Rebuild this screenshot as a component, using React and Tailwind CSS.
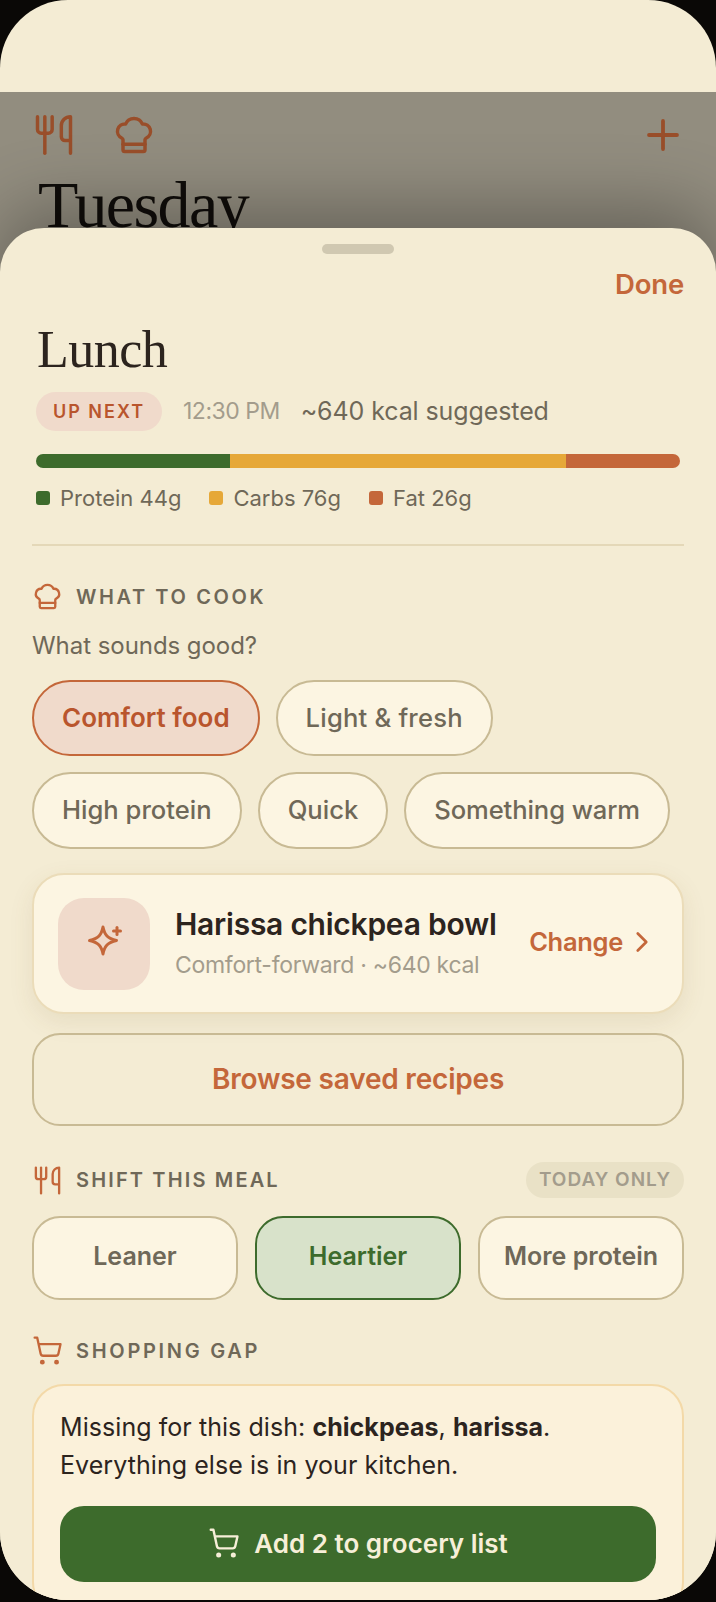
import React from "react";
import { ChefHat, Utensils, Plus, ShoppingCart, ChevronRight } from "lucide-react";

const Sparkle = () => (
  <svg width="36" height="36" viewBox="0 0 36 36" fill="none" stroke="#c4673a" strokeWidth="3" strokeLinecap="round" strokeLinejoin="round" className="overflow-visible">
    <path d="M17 1C18.6 9 21.5 12.4 30.5 14.5C21.5 16.6 18.6 20 17 28C15.4 20 12.5 16.6 3.5 14.5C12.5 12.4 15.4 9 17 1Z" />
    <path d="M31 1.5v7" />
    <path d="M27.5 5h7" />
  </svg>
);

const Chip = ({ children, active, tall, track = "" }) => (
  <div className={`${tall ? "h-[77px]" : "h-[76px]"} px-[28px] pb-[1px] flex items-center rounded-full border-2 leading-none ${track} ${active ? "text-[26px] bg-[#f0dacb] border-[#c4673a] text-[#b9552d] font-semibold" : "text-[25.6px] bg-[#fcf5e2] border-[#c8ba94] text-[#6f6858] font-medium"}`}>
    {children}
  </div>
);

const SectionLabel = ({ icon, children, track }) => (
  <div className="flex items-center gap-[13px]">
    <span className="w-[31px] flex justify-center">{icon}</span>
    <span className={`text-[20px] font-semibold text-[#6f6858] leading-none ${track}`}>{children}</span>
  </div>
);

const Shift = ({ children, active }) => (
  <div className={`flex-1 h-[84px] pb-[3px] rounded-[28px] border-2 flex items-center justify-center text-[25px] leading-none font-semibold ${active ? "bg-[#d8e2ca] border-[#3d6b2c] text-[#3d6b2c]" : "bg-[#fcf5e2] border-[#c8ba94] text-[#6f6858]"}`}>
    {children}
  </div>
);

export default function App() {
  return (
    <div className="w-[716px] h-[1602px] bg-[#0a0806] overflow-hidden font-['Inter',sans-serif]">
      <div className="relative w-[716px] h-[1600px] rounded-[68px] overflow-hidden bg-[#f4ecd4]">
        <div className="h-[92px]" />
        <div className="h-[240px] px-9 pt-[19px] overflow-hidden">
          <div className="flex items-center">
            <Utensils size={44} color="#ff8246" strokeWidth={1.9} className="-ml-[4px]" />
            <ChefHat size={44} color="#ff8246" strokeWidth={1.9} className="ml-[36px]" />
            <Plus size={48} color="#ff8246" strokeWidth={1.9} className="ml-auto -mr-[7px]" />
          </div>
          <div className="font-['Liberation_Serif',serif] text-[66px] leading-none tracking-[-1.6px] text-[#1c1712] mt-[13px] ml-[2px]">Tuesday</div>
        </div>
        <div className="absolute left-0 right-0 top-[92px] h-[200px] bg-black/40" />

        <div className="absolute left-0 right-0 top-[228px] bottom-0 rounded-t-[44px] bg-[#f4ecd4] px-8 overflow-hidden shadow-[0_-20px_70px_rgba(0,0,0,0.3)]">
          <div className="mt-4 mx-auto w-[72px] h-2.5 rounded-full bg-[#d0c8b1]" />
          <div className="mt-[14px] flex justify-end text-[27.5px] leading-[32px] font-semibold text-[#c4673a] tracking-[-0.2px]">Done</div>

          <div className="px-1">
            <div className="font-['Liberation_Serif',serif] text-[52px] leading-[60px] tracking-[-0.5px] text-[#2c241e] mt-[20px] pl-[1px]">Lunch</div>
            <div className="flex items-center mt-[12px] h-[39px]">
              <div className="h-[39px] w-[126px] rounded-full bg-[#f0dacb] text-[#b9552d] text-[18px] font-semibold tracking-[2px] flex items-center justify-center">UP NEXT</div>
              <span className="ml-[21px] text-[23px] text-[#a39c8c] tracking-[-0.5px]">12:30 PM</span>
              <span className="ml-[21px] text-[25px] text-[#6f6858] tracking-[-0.1px]">~640 kcal suggested</span>
            </div>
            <div className="flex mt-[23px] h-[14px] rounded-full overflow-hidden">
              <div className="w-[194px] bg-[#3d6b2c]" />
              <div className="w-[336px] bg-[#e6a838]" />
              <div className="flex-1 bg-[#c4673a]" />
            </div>
            <div className="flex items-center mt-[16px] h-[28px] text-[22px] text-[#6f6858]">
              <i className="w-[14px] h-[14px] rounded-[3px] bg-[#3d6b2c]" />
              <span className="ml-[10px]">Protein 44g</span>
              <i className="ml-[28px] w-[14px] h-[14px] rounded-[3px] bg-[#e6a838]" />
              <span className="ml-[10px]">Carbs 76g</span>
              <i className="ml-[28px] w-[14px] h-[14px] rounded-[3px] bg-[#c4673a]" />
              <span className="ml-[10px]">Fat 26g</span>
            </div>
          </div>

          <div className="mt-[32px] h-[2px] bg-[#e4d8b8]" />

          <div className="mt-[35px]">
            <SectionLabel track="tracking-[2.6px]" icon={<ChefHat size={31} color="#c4673a" strokeWidth={1.8} />}>WHAT TO COOK</SectionLabel>
          </div>
          <div className="mt-[18px] text-[24px] leading-[32px] text-[#6f6858] tracking-[-0.05px]">What sounds good?</div>

          <div className="mt-[18px] flex flex-wrap gap-x-[16px] gap-y-[16px]">
            <Chip active>Comfort food</Chip>
            <Chip track="tracking-[0.2px]">Light &amp; fresh</Chip>
            <Chip tall>High protein</Chip>
            <Chip tall>Quick</Chip>
            <Chip tall track="tracking-[-0.1px]">Something warm</Chip>
          </div>

          <div className="mt-[24px] h-[141px] rounded-[32px] border-2 border-[#ebdcb9] bg-[#fcf5e2] shadow-[0_8px_24px_rgba(120,90,40,0.1)] flex items-center pl-[24px] pr-[33px]">
            <div className="w-[92px] h-[92px] rounded-[26px] bg-[#f0dacb] flex items-center justify-center"><Sparkle /></div>
            <div className="ml-[25px] flex-1 pb-[2px]">
              <div className="text-[30px] leading-[36px] font-semibold text-[#2c241e] tracking-[-0.25px]">Harissa chickpea bowl</div>
              <div className="mt-[9px] text-[23px] leading-[28px] text-[#a39c8c] tracking-[-0.3px]">Comfort-forward · ~640 kcal</div>
            </div>
            <div className="flex items-center pb-[3px] text-[25.5px] font-semibold text-[#c4673a] tracking-[-0.3px]">
              Change<ChevronRight size={34} strokeWidth={1.9} className="ml-[2px] -mr-[10px]" />
            </div>
          </div>

          <div className="mt-[19px] h-[93px] pb-[2px] rounded-[28px] border-2 border-[#c8ba94] flex items-center justify-center text-[28px] font-semibold text-[#c4673a] tracking-[-0.2px]">Browse saved recipes</div>

          <div className="mt-[36px] flex items-center justify-between">
            <SectionLabel track="tracking-[2.15px]" icon={<Utensils size={31} color="#c4673a" strokeWidth={1.8} />}>SHIFT THIS MEAL</SectionLabel>
            <div className="h-[36px] w-[158px] rounded-full bg-[#e9e1c6] text-[#a39c8c] text-[19px] font-semibold tracking-[1px] flex items-center justify-center">TODAY ONLY</div>
          </div>

          <div className="mt-[18px] flex gap-[17px]">
            <Shift>Leaner</Shift>
            <Shift active>Heartier</Shift>
            <Shift>More protein</Shift>
          </div>

          <div className="mt-[35px]">
            <SectionLabel track="tracking-[2.7px]" icon={<ShoppingCart size={31} color="#c4673a" strokeWidth={1.8} />}>SHOPPING GAP</SectionLabel>
          </div>

          <div className="mt-[18px] rounded-[32px] border-2 border-[#f3d9a8] bg-[#fbf1da] px-[26px] pt-[22px] pb-[30px]">
            <div className="text-[25px] leading-[38px] text-[#2c241e] tracking-[0.06px]">
              Missing for this dish: <b className="font-bold">chickpeas</b>, <b className="font-bold">harissa</b>.<br />Everything else is in your kitchen.
            </div>
            <div className="mt-[22px] h-[76px] pb-[2px] rounded-[24px] bg-[#3d6b2c] flex items-center justify-center gap-[14px] text-[26px] font-semibold text-[#f7efd8]">
              <ShoppingCart size={32} strokeWidth={1.8} />Add 2 to grocery list
            </div>
          </div>
        </div>
      </div>
    </div>
  );
}
